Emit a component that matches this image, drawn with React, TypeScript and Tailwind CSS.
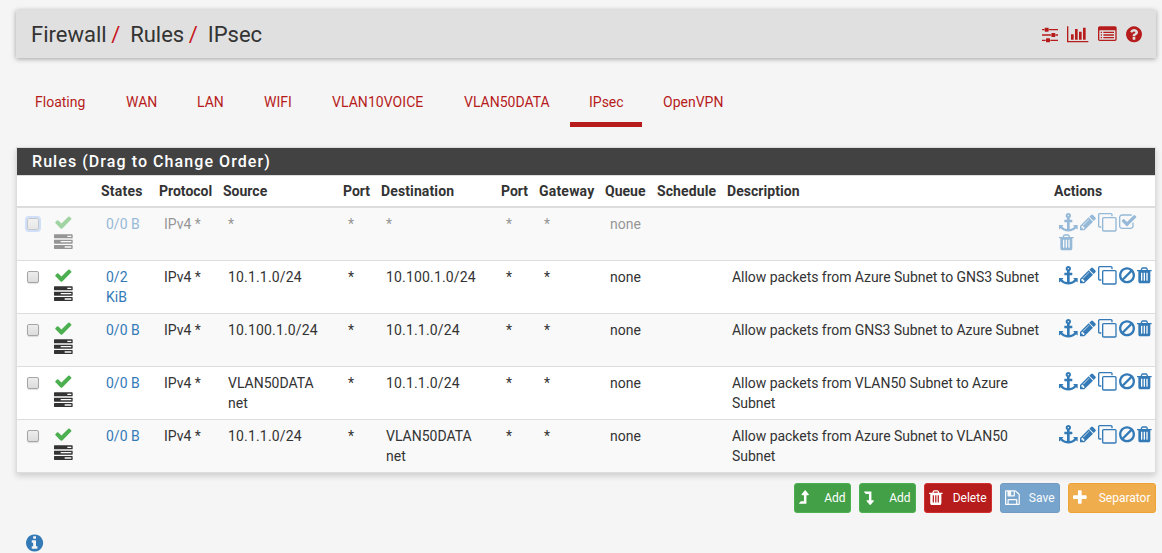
import React from "react";

type Glyph = { x: number; w: number; d: string; flip?: boolean };

const disc =
  "q0 209-103 385.5t-279.5 279.5-385.5 103-385.5-103-279.5-279.5-103-385.5 103-385.5 279.5-279.5 385.5-103 385.5 103 279.5 279.5 103 385.5z";
const slot = "q0 14 9 23t23 9h64q14 0 23-9t9-23v-704q0-14-9-23t-23-9h-64q-14 0-23 9t-9 23z";
const level =
  "M1337 605q-17 35-57 35h-192v864q0 14-9 23t-23 9h-704q-21 0-29-18-8-20 4-35l160-192q9-11 25-11h320v-640h-192q-40 0-57-35-18-36 9-68l320-384q18-22 49-22t49 22l320 384q27 32 8 68z";
const listDot = "q0 13-9.5 22.5t-22.5 9.5h-64q-13 0-22.5-9.5t-9.5-22.5v-64q0-13 9.5-22.5t22.5-9.5h64q13 0 22.5 9.5t9.5 22.5z";
const listBar = "q0 13-9.5 22.5t-22.5 9.5h-960q-13 0-22.5-9.5t-9.5-22.5v-64q0-13 9.5-22.5t22.5-9.5h960q13 0 22.5 9.5t9.5 22.5z";
const taskBar = "v256q0 26-19 45t-45 19h-1664q-26 0-45-19t-19-45v-256q0-26 19-45t45-19h1664q26 0 45 19t19 45z";

const glyphs = {
  sliders: {
    x: 128,
    w: 1536,
    d: "M480 1408v128h-352v-128h352zm352-128q26 0 45 19t19 45v256q0 26-19 45t-45 19h-256q-26 0-45-19t-19-45v-256q0-26 19-45t45-19h256zm160-384v128h-864v-128h864zm-640-512v128h-224v-128h224zm1312 1024v128h-736v-128h736zm-960-1152q26 0 45 19t19 45v256q0 26-19 45t-45 19h-256q-26 0-45-19t-19-45v-256q0-26 19-45t45-19h256zm640 512q26 0 45 19t19 45v256q0 26-19 45t-45 19h-256q-26 0-45-19t-19-45v-256q0-26 19-45t45-19h256zm320 128v128h-224v-128h224zm0-512v128h-864v-128h864z",
  },
  chart: {
    x: 0,
    w: 2048,
    d: "M640 896v512h-256v-512h256zm384-512v1024h-256v-1024h256zm1024 1152v128h-2048v-1536h128v1408h1920zm-640-896v768h-256v-768h256zm384-384v1152h-256v-1152h256z",
  },
  list: {
    x: 0,
    w: 1792,
    d: `M384 1248${listDot}M384 992${listDot}M384 736${listDot}M1536 1248${listBar}M1536 992${listBar}M1536 736${listBar}M1664 1376v-832q0-13-9.5-22.5t-22.5-9.5h-1472q-13 0-22.5 9.5t-9.5 22.5v832q0 13 9.5 22.5t22.5 9.5h1472q13 0 22.5-9.5t9.5-22.5zm128-1088v1088q0 66-47 113t-113 47h-1472q-66 0-113-47t-47-113v-1088q0-66 47-113t113-47h1472q66 0 113 47t47 113z`,
  },
  question: {
    x: 128,
    w: 1536,
    d: `M1024 1376v-192q0-14-9-23t-23-9h-192q-14 0-23 9t-9 23v192q0 14 9 23t23 9h192q14 0 23-9t9-23zm256-672q0-88-55.5-163t-138.5-116-170-41q-243 0-371 213-15 24 8 42l132 100q7 6 19 6 16 0 25-12 53-68 86-92 34-24 86-24 48 0 85.5 26t37.5 59q0 38-20 61t-68 45q-63 28-115.5 86.5t-52.5 125.5v36q0 14 9 23t23 9h192q14 0 23-9t9-23q0-19 21.5-49.5t54.5-49.5q32-18 49-28.5t46-35 44.5-48 28-60.5 12.5-81zm384 192${disc}`,
  },
  info: {
    x: 128,
    w: 1536,
    d: `M1152 1376v-160q0-14-9-23t-23-9h-96v-512q0-14-9-23t-23-9h-320q-14 0-23 9t-9 23v160q0 14 9 23t23 9h96v320h-96q-14 0-23 9t-9 23v160q0 14 9 23t23 9h448q14 0 23-9t9-23zm-128-896v-160q0-14-9-23t-23-9h-192q-14 0-23 9t-9 23v160q0 14 9 23t23 9h192q14 0 23-9t9-23zm640 416${disc}`,
  },
  check: {
    x: 0,
    w: 1792,
    d: "M1671 566q0 40-28 68l-724 724-136 136q-28 28-68 28t-68-28l-136-136-362-362q-28-28-28-68t28-68l136-136q28-28 68-28t68 28l294 295 656-657q28-28 68-28t68 28l136 136q28 28 28 68z",
  },
  tasks: {
    x: 0,
    w: 1792,
    d: `M1024 1408h640v-128h-640v128zm-384-512h1024v-128h-1024v128zm640-512h384v-128h-384v128zM1792 1216${taskBar}M1792 704${taskBar}M1792 192${taskBar}`,
  },
  anchor: {
    x: 0,
    w: 1792,
    d: "M960 256q0-26-19-45t-45-19-45 19-19 45 19 45 45 19 45-19 19-45zm832 928v352q0 22-20 30-8 2-12 2-12 0-23-9l-93-93q-119 143-318.5 226.5t-429.5 83.5-429.5-83.5-318.5-226.5l-93 93q-9 9-23 9-4 0-12-2-20-8-20-30v-352q0-14 9-23t23-9h352q22 0 30 20 8 19-7 35l-100 100q67 91 189.5 153.5t271.5 82.5v-647h-192q-26 0-45-19t-19-45v-128q0-26 19-45t45-19h192v-163q-58-34-93-92.5t-35-128.5q0-106 75-181t181-75 181 75 75 181q0 70-35 128.5t-93 92.5v163h192q26 0 45 19t19 45v128q0 26-19 45t-45 19h-192v647q149-20 271.5-82.5t189.5-153.5l-100-100q-15-16-7-35 8-20 30-20h352q14 0 23 9t9 23z",
  },
  pencil: {
    x: 128,
    w: 1536,
    d: "M491 1536l91-91-235-235-91 91v107h128v128h107zm523-928q0-22-22-22-10 0-17 7l-542 542q-7 7-7 17 0 22 22 22 10 0 17-7l542-542q7-7 7-17zm-54-192l416 416-832 832h-416v-416zm683 96q0 53-37 90l-166 166-416-416 166-165q36-38 90-38 53 0 91 38l235 234q37 39 37 91z",
  },
  clone: {
    x: 0,
    w: 1792,
    d: "M1664 1632v-1088q0-13-9.5-22.5t-22.5-9.5h-1088q-13 0-22.5 9.5t-9.5 22.5v1088q0 13 9.5 22.5t22.5 9.5h1088q13 0 22.5-9.5t9.5-22.5zm128-1088v1088q0 66-47 113t-113 47h-1088q-66 0-113-47t-47-113v-1088q0-66 47-113t113-47h1088q66 0 113 47t47 113zm-384-384v160h-128v-160q0-13-9.5-22.5t-22.5-9.5h-1088q-13 0-22.5 9.5t-9.5 22.5v1088q0 13 9.5 22.5t22.5 9.5h160v128h-160q-66 0-113-47t-47-113v-1088q0-66 47-113t113-47h1088q66 0 113 47t47 113z",
  },
  ban: {
    x: 128,
    w: 1536,
    d: "M1440 893q0-161-87-295l-754 753q137 89 297 89 111 0 211.5-43.5t173.5-116.5 116-174.5 43-212.5zm-999 299l755-754q-135-91-300-91-148 0-273 73t-198 199-73 274q0 162 89 299zm1223-299q0 157-61 300t-163.5 246-245 164-298.5 61-298.5-61-245-164-163.5-246-61-300 61-299.5 163.5-245.5 245-164 298.5-61 298.5 61 245 164 163.5 245.5 61 299.5z",
  },
  trash: {
    x: 192,
    w: 1408,
    d: `M576 1376${slot}M832 1376${slot}M1088 1376${slot}M672 384h448l-48-117q-7-9-17-11h-317q-10 2-17 11zm928 32v64q0 14-9 23t-23 9h-96v948q0 83-47 143.5t-113 60.5h-832q-66 0-113-58.5t-47-141.5v-952h-96q-14 0-23-9t-9-23v-64q0-14 9-23t23-9h309l70-167q15-37 54-63t79-26h320q40 0 79 26t54 63l70 167h309q14 0 23 9t9 23z`,
  },
  checkSquare: {
    x: 64,
    w: 1664,
    d: "M1472 930v318q0 119-84.5 203.5t-203.5 84.5h-832q-119 0-203.5-84.5t-84.5-203.5v-832q0-119 84.5-203.5t203.5-84.5h832q63 0 117 25 15 7 18 23 3 17-9 29l-49 49q-10 10-23 10-3 0-9-2-23-6-45-6h-832q-66 0-113 47t-47 113v832q0 66 47 113t113 47h832q66 0 113-47t47-113v-254q0-13 9-22l64-64q10-10 23-10 6 0 12 3 20 8 20 29zm231-489l-814 814q-24 24-57 24t-57-24l-430-430q-24-24-24-57t24-57l110-110q24-24 57-24t57 24l263 263 647-647q24-24 57-24t57 24l110 110q24 24 24 57t-24 57z",
  },
  save: {
    x: 128,
    w: 1536,
    d: "M512 1536h768v-384h-768v384zm896 0h128v-896q0-14-10-38.5t-20-34.5l-281-281q-10-10-34-20t-39-10v416q0 40-28 68t-68 28h-576q-40 0-68-28t-28-68v-416h-128v1280h128v-416q0-40 28-68t68-28h832q40 0 68 28t28 68v416zm-384-928v-320q0-13-9.5-22.5t-22.5-9.5h-192q-13 0-22.5 9.5t-9.5 22.5v320q0 13 9.5 22.5t22.5 9.5h192q13 0 22.5-9.5t9.5-22.5zm640 32v928q0 40-28 68t-68 28h-1344q-40 0-68-28t-28-68v-1344q0-40 28-68t68-28h928q40 0 88 20t76 48l280 280q28 28 48 76t20 88z",
  },
  plus: {
    x: 192,
    w: 1408,
    d: "M1600 736v192q0 40-28 68t-68 28h-416v416q0 40-28 68t-68 28h-192q-40 0-68-28t-28-68v-416h-416q-40 0-68-28t-28-68v-192q0-40 28-68t68-28h416v-416q0-40 28-68t68-28h192q40 0 68 28t28 68v416h416q40 0 68 28t28 68z",
  },
  levelUp: { x: 320, w: 1024, d: level },
  levelDown: { x: 320, w: 1024, d: level, flip: true },
} satisfies Record<string, Glyph>;

type IconName = keyof typeof glyphs;

function Icon({ name, size = 18.67, className = "" }: { name: IconName; size?: number; className?: string }) {
  const g: Glyph = glyphs[name];
  return (
    <svg
      viewBox={`${g.x} 0 ${g.w} 1792`}
      width={(g.w / 1792) * size}
      height={size}
      fill="currentColor"
      fillRule="evenodd"
      className={`block shrink-0 overflow-visible ${className}`}
      aria-hidden="true"
    >
      <path d={g.d} transform={g.flip ? "translate(0 1792) scale(1 -1)" : undefined} />
    </svg>
  );
}

const tabs = [
  { name: "Floating", width: "w-[91px] pl-[19px]" },
  { name: "WAN", width: "w-[71px] pl-[19px]" },
  { name: "LAN", width: "w-[67px] pl-[19px]" },
  { name: "WIFI", width: "w-[68px] pl-[19px]" },
  { name: "VLAN10VOICE", width: "w-[132px] pl-[19px] tracking-[0.05px]" },
  { name: "VLAN50DATA", width: "w-[125px] pl-[19px]" },
  { name: "IPsec", width: "w-[72px] pl-[19px]" },
  { name: "OpenVPN", width: "w-[101px] pl-[21px]" },
];

const columns = [
  { title: "", width: "w-[27px]" },
  { title: "", width: "w-[52px]" },
  { title: "States", width: "w-[58px] tracking-[0.2px]" },
  { title: "Protocol", width: "w-[64px]" },
  { title: "Source", width: "w-[120px]" },
  { title: "Port", width: "w-[38px]" },
  { title: "Destination", width: "w-[120px] tracking-[0.12px]" },
  { title: "Port", width: "w-[38px]" },
  { title: "Gateway", width: "w-[66px] tracking-[0.2px]" },
  { title: "Queue", width: "w-[52px]" },
  { title: "Schedule", width: "w-[70px] tracking-[0.1px]" },
  { title: "Description", width: "w-[327px] tracking-[0.05px]" },
  { title: "Actions", width: "w-[106px]" },
];

const rules = [
  { states: "0/0 B", source: "*", dest: "*", text: "", disabled: true },
  { states: "0/2\nKiB", source: "10.1.1.0/24", dest: "10.100.1.0/24", text: "Allow packets from Azure Subnet to GNS3 Subnet" },
  { states: "0/0 B", source: "10.100.1.0/24", dest: "10.1.1.0/24", text: "Allow packets from GNS3 Subnet to Azure Subnet" },
  { states: "0/0 B", source: "VLAN50DATA\nnet", dest: "10.1.1.0/24", text: "Allow packets from VLAN50 Subnet to Azure\nSubnet" },
  { states: "0/0 B", source: "10.1.1.0/24", dest: "VLAN50DATA\nnet", text: "Allow packets from Azure Subnet to VLAN50\nSubnet" },
];

const buttons: { icon: IconName; label: string; style: string }[] = [
  { icon: "levelUp", label: "Add", style: "w-[57px] bg-[#43a047] border-[#4caf50]" },
  { icon: "levelDown", label: "Add", style: "w-[57px] bg-[#43a047] border-[#4caf50]" },
  { icon: "trash", label: "Delete", style: "w-[68px] bg-[#b71c1c] border-[#d32f2f]" },
  { icon: "save", label: "Save", style: "w-[60px] bg-[#337ab7] border-[#2e6da4] opacity-65" },
  { icon: "plus", label: "Separator", style: "w-[88px] bg-[#f0ad4e] border-[#eea236]" },
];

export default function App() {
  return (
    <div className="h-[553px] w-[1162px] overflow-hidden bg-[#f5f5f5] pt-[10px] pr-[6px] pl-4 font-['Roboto',sans-serif] text-[14px] leading-5 text-[#333]">
      <header className="flex h-12 items-center justify-between bg-[#e0e0e0] pr-[14px] pl-[15px] shadow-[0_1px_5px_rgba(0,0,0,0.35)]">
        <h1 className="flex pt-[2px] text-[22px] leading-6 text-[#333]">
          <span>Firewall</span>
          <span className="w-[23.5px] pl-[4.5px] text-[#c9151e]">/</span>
          <span>Rules</span>
          <span className="w-[23.5px] pl-[4.5px] text-[#c9151e]">/</span>
          <span>IPsec</span>
        </h1>
        <div className="flex gap-[9.2px] pr-[0.5px] text-[#b71c1c]">
          <Icon name="sliders" />
          <Icon name="chart" />
          <Icon name="list" />
          <Icon name="question" />
        </div>
      </header>

      <nav className="mt-[24px] flex h-[45px] text-[#b71c1c]">
        {tabs.map((t) => (
          <a key={t.name} className={`${t.width} pt-[10px] ${t.name === "IPsec" ? "border-b-[5px] border-[#b71c1c]" : ""}`}>
            {t.name}
          </a>
        ))}
      </nav>

      <section className="mt-5 h-[326px] border border-[#ddd] bg-white shadow-[0_3px_6px_rgba(0,0,0,0.16)]">
        <h2 className="flex h-7 items-center border-b border-[#ddd] bg-[#424242] pl-[15px] text-[16px] font-medium tracking-[1.07px] text-white">
          Rules (Drag to Change Order)
        </h2>
        <table className="w-[1138px] table-fixed border-collapse">
          <thead>
            <tr className="h-[31px] border-b-2 border-[#ddd]">
              {columns.map((c, i) => (
                <th key={i} className={`${c.width} p-0 pl-[5px] text-left font-bold whitespace-nowrap`}>
                  {c.title}
                </th>
              ))}
            </tr>
          </thead>
          <tbody>
            {rules.map((r, i) => {
              const fade = r.disabled ? "opacity-50" : "";
              const cell = "p-0 pt-[6px] pl-[10px] align-top whitespace-pre";
              return (
                <tr key={i} className={`h-[53px] border-b border-[#ddd] last:border-b-0 ${i % 2 === 0 ? "bg-[#f9f9f9]" : "bg-white"}`}>
                  <td className="p-0 pt-[10px] pl-[10px] align-top">
                    <input
                      type="checkbox"
                      className={`block size-3 appearance-none rounded-[2px] border border-[#a5a5a5] bg-linear-to-b from-[#ededed] to-[#dcdcdc] shadow-[0_1px_1px_rgba(0,0,0,0.12)] ${r.disabled ? "opacity-60 outline-2 outline-[#b5cffb]" : ""}`}
                    />
                  </td>
                  <td className="p-0 pt-[5px] pl-[10px] align-top">
                    <div className={`-ml-[0.4px] flex flex-col gap-[1.3px] ${fade}`}>
                      <Icon name="check" className="text-[#4caf50]" />
                      <Icon name="tasks" />
                    </div>
                  </td>
                  <td className={cell}>
                    <div className={`text-[#337ab7] ${fade}`}>{r.states}</div>
                  </td>
                  {["IPv4 *", r.source, "*", r.dest, "*", "*", "none", "", r.text].map((value, k) => (
                    <td key={k} className={cell}>
                      <div
                        className={`${fade} ${value.includes("/24") ? "tracking-[0.17px]" : ""} ${k === 8 ? "tracking-[-0.04px]" : ""}`}
                      >
                        {value}
                      </div>
                    </td>
                  ))}
                  <td className="p-0 pt-[5px] pl-[10px] align-top">
                    <div className={`-ml-[0.4px] flex w-[94px] flex-wrap gap-x-[2.3px] gap-y-[1.3px] text-[#337ab7] ${fade}`}>
                      <Icon name="anchor" />
                      <Icon name="pencil" />
                      <Icon name="clone" />
                      <Icon name={r.disabled ? "checkSquare" : "ban"} />
                      <Icon name="trash" />
                    </div>
                  </td>
                </tr>
              );
            })}
          </tbody>
        </table>
      </section>

      <div className="mt-[10px] flex justify-end gap-2">
        {buttons.map((b, i) => (
          <button
            key={i}
            className={`${b.style} flex h-[30px] items-center justify-between rounded-[3px] border pr-[4.5px] pl-[4px] text-[12px] text-white`}
          >
            <Icon name={b.icon} size={17.33} />
            <span>{b.label}</span>
          </button>
        ))}
      </div>

      <div className="mt-[19.5px] pl-[10px] text-[#337ab7]">
        <Icon name="info" size={20} />
      </div>
    </div>
  );
}
